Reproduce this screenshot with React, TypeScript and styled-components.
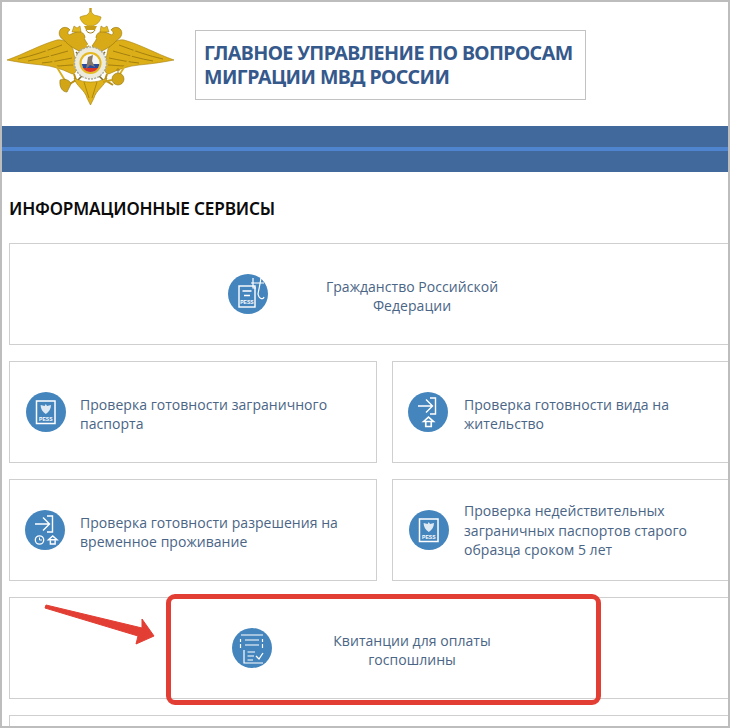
import styled, { createGlobalStyle } from "styled-components";

const GlobalStyle = createGlobalStyle`
  html, body { margin: 0; padding: 0; background: #fff; }
  * { box-sizing: border-box; }
`;

const Frame = styled.div`
  position: relative;
  width: 730px;
  height: 728px;
  overflow: hidden;
  border: 2px solid #bdbdbd;
  background: #fff;
  font-family: "Open Sans", "Noto Sans", sans-serif;
`;

const Header = styled.header`
  height: 124px;
  display: flex;
  align-items: flex-start;
  padding: 6px 0 0 4px;
`;

const TitleBox = styled.div`
  width: 391px;
  height: 70px;
  margin: 22px 0 0 19px;
  padding: 10px 8px 0;
  border: 1px solid #c2c2c2;
  color: #36598c;
  font-family: "Noto Sans", sans-serif;
  font-weight: 700;
  font-size: 19.6px;
  line-height: 24px;
  letter-spacing: -0.57px;
  white-space: nowrap;
`;

const Banner = styled.div`
  height: 46px;
  padding-top: 21px;
  background: #41699b;
`;

const Stripe = styled.div`
  height: 4px;
  background: #4f84cf;
`;

const Heading = styled.h1`
  margin: 26px 0 23px 7px;
  height: 22px;
  color: #0b0b0b;
  font-family: "Noto Sans", sans-serif;
  font-weight: 600;
  font-size: 17.2px;
  line-height: 22px;
  letter-spacing: -0.2px;
  white-space: nowrap;
`;

const Grid = styled.div`
  display: grid;
  grid-template-columns: 368px 368px;
  grid-auto-rows: 102px;
  gap: 16px 15px;
  margin-left: 7px;
`;

const Card = styled.div<{ $wide?: boolean; $inset: number; $gap: number }>`
  display: flex;
  align-items: center;
  gap: ${(p) => p.$gap}px;
  padding-left: ${(p) => p.$inset}px;
  border: 1px solid #cfcfcf;
  background: #fff;
  grid-column: ${(p) => (p.$wide ? "1 / span 2" : "auto")};
  color: #4a6585;
  font-size: 14px;
  line-height: 19.5px;
  letter-spacing: 0.04px;
`;

const Label = styled.div<{ $drop?: number }>`
  width: 280px;
  padding-top: ${(p) => p.$drop ?? 4}px;
`;

const CenteredLabel = styled.div`
  width: 200px;
  padding-top: 4px;
  text-align: center;
`;

const IconCircle = styled.svg`
  flex: none;
  width: 40px;
  height: 40px;
  display: block;
`;

const Highlight = styled.div`
  position: absolute;
  left: 164px;
  top: 592px;
  width: 435px;
  height: 111px;
  border: 5px solid #e33e33;
  border-radius: 9px;
`;

const Arrow = styled.svg`
  position: absolute;
  left: 38px;
  top: 598px;
  width: 120px;
  height: 50px;
`;

const Emblem = styled.svg`
  flex: none;
  width: 170px;
  height: 100px;
`;

function EagleSide({ flip }: { flip?: boolean }) {
  return (
    <g transform={flip ? "translate(169 0) scale(-1 1)" : undefined}>
      {/* wing */}
      <path d="M1 52 C18 46 36 36 51 32 C58 31 64 35 67 41 L70 56 C71 63 69 68 64 65 C56 61 46 58 36 57 C24 56 11 54 1 52 Z" fill="#dcae18" stroke="#a88210" strokeWidth=".6" />
      <path d="M12 51 C26 48 40 43 56 37 M22 53 C34 51 48 47 62 43 M36 55 C46 54 56 52 66 50 M50 58 C56 58 62 57 67 57" stroke="#94730c" strokeWidth=".8" fill="none" />
      {/* neck, head and curled feather */}
      <path d="M58 32 C54 30 52 26 54 22 C57 18 62 19 64 22 C62 23 61 25 63 27 L70 24 C75 22 80 26 79 32 L83 38 L76 44 C70 42 63 38 58 32 Z" fill="#d8aa17" stroke="#94730c" strokeWidth=".6" />
      <path d="M66 24 L68 18 L71 20 L74 18 L75 24 Z" fill="#e3b921" stroke="#94730c" strokeWidth=".5" />
      <path d="M79 30 L88 38" stroke="#fff" strokeWidth="1.2" />
      {/* sceptre line */}
      <path d="M39 40 L60 74" stroke="#d8ae1c" strokeWidth="1.8" />
      <path d="M70 44 L97 72" stroke="#7e6c28" strokeWidth="1.6" />
      {/* leg */}
      <path d="M68 66 L70 72 L62 77" stroke="#b98f14" strokeWidth="2" fill="none" />
    </g>
  );
}

function GoldEmblem() {
  return (
    <Emblem viewBox="0 0 170 100">
      <EagleSide />
      <EagleSide flip />
      {/* crown */}
      <path d="M84.5 18 C78 18 74 12 74 9 C78 7 81 8 82 6 L84.5 3 L87 6 C88 8 91 7 95 9 C95 12 91 18 84.5 18 Z" fill="#e3b81d" stroke="#a78311" strokeWidth=".6" />
      <path d="M84.5 -1 L84.5 4" stroke="#c79d18" strokeWidth="2.4" />
      <path d="M78 18 H91 L89 22 H80 Z" fill="#c79d18" />
      <path d="M80 22 C82 26 87 26 89 22" stroke="#9a7a14" fill="none" />
      {/* tail */}
      <path d="M68 70 C74 73 79 74 84.5 74 C90 74 95 73 101 70 C99 78 90 82 88 90 L84.5 97 L81 90 C79 82 70 78 68 70 Z" fill="#dfb21a" stroke="#a17d10" strokeWidth=".6" />
      <path d="M78 74 L83 90 M91 74 L86 90" stroke="#a07c0e" strokeWidth=".8" />
      {/* claws and orb */}
      <path d="M54 72 C58 70 64 72 65 76 L61 84 C57 84 53 80 54 72 Z" fill="#d2a517" stroke="#8f7312" strokeWidth=".6" />
      <circle cx="112" cy="71" r="6" fill="#d2a517" stroke="#8f7312" strokeWidth=".6" />
      <path d="M112 60 V65 M110 62 H114" stroke="#a98410" strokeWidth="1" />
      <path d="M97 74 L106 72" stroke="#c9a01a" strokeWidth="2" />
      {/* shield */}
      <circle cx="84.5" cy="55" r="16" fill="#ecebdc" stroke="#a9a99c" strokeWidth="1.4" strokeDasharray="2 1.2" />
      <circle cx="84.5" cy="55" r="11" fill="#e4b81e" />
      <circle cx="84.5" cy="55" r="9" fill="#f6f6f6" />
      <path d="M75.7 56 H93.3 A9 9 0 0 1 92 60 H77 Z" fill="#2a4ba0" />
      <path d="M77 60 H92 A9 9 0 0 1 77 60 Z" fill="#d9362b" />
      <path d="M82 49 L87 47 L86 53 L89 59 L84 57 L80 61 Z" fill="#85796c" />
    </Emblem>
  );
}

const Disc = () => <circle cx="20" cy="20" r="20" fill="#4585bd" />;

function CitizenIcon() {
  return (
    <IconCircle viewBox="0 0 40 40">
      <Disc />
      <rect x="11" y="12" width="16" height="21" fill="none" stroke="#fff" strokeWidth="1.4" />
      <path d="M14.5 17 H23.5 M16 21.5 H22" stroke="#fff" strokeWidth="1.3" />
      <text x="19" y="30" textAnchor="middle" fontSize="5" fontWeight="700" fill="#fff" fontFamily="Liberation Sans">PESS</text>
      <path d="M25 4 V14 H28 M23 9 H36 M33 4 C32 10 31 15 30 20 C31 25 35 26 36 23" stroke="#fff" strokeWidth="1.2" fill="none" />
    </IconCircle>
  );
}

function PassportIcon() {
  return (
    <IconCircle viewBox="0 0 40 40">
      <Disc />
      <rect x="10.5" y="9" width="18.5" height="22.5" fill="none" stroke="#fff" strokeWidth="1.5" />
      <path d="M19.8 12 L21 14 L25 13 C25 17 23 20 19.8 22 C16.6 20 14.6 17 14.6 13 L18.6 14 Z" fill="#dfe9f3" />
      <text x="19.8" y="29" textAnchor="middle" fontSize="5" fontWeight="700" fill="#fff" fontFamily="Liberation Sans">PESS</text>
    </IconCircle>
  );
}

function ArrowInPath() {
  return <path d="M10 14 H24 M18 7.5 L24.5 14 L18 20.5 M22 6 H27.5 V22 H22" stroke="#fff" strokeWidth="1.4" fill="none" />;
}

function HouseIcon({ x, y, size }: { x: number; y: number; size: number }) {
  const s = size / 10;
  return (
    <g transform={`translate(${x} ${y}) scale(${s})`} stroke="#fff" strokeWidth="1.5" fill="none">
      <path d="M.5 5 L5 1 L9.5 5 Z" />
      <path d="M2.5 5.5 V9.5 H7.5 V5.5" />
    </g>
  );
}

function ResidenceIcon() {
  return (
    <IconCircle viewBox="0 0 40 40">
      <Disc />
      <ArrowInPath />
      <HouseIcon x={15} y={24} size={11} />
    </IconCircle>
  );
}

function TemporaryIcon() {
  return (
    <IconCircle viewBox="0 0 40 40">
      <Disc />
      <ArrowInPath />
      <circle cx="14.5" cy="30" r="4.2" stroke="#fff" strokeWidth="1.3" fill="none" />
      <path d="M14.5 27.5 V30 H17" stroke="#fff" strokeWidth="1" fill="none" />
      <HouseIcon x={23} y={25} size={9.5} />
    </IconCircle>
  );
}

function ReceiptIcon() {
  return (
    <IconCircle viewBox="0 0 40 40">
      <Disc />
      <path d="M9 7 H31 M13 12 H27 M13 17 H27 M8.5 11 V14 M8.5 16 V20 M30.5 11 V14 M30.5 16 V20 M12 22 V35 H31 M15.5 24 H23 M15.5 28 H22 M15.5 32 H21" stroke="#fff" strokeWidth="1.2" fill="none" />
      <path d="M24 28 L27 31 L31 25" stroke="#fff" strokeWidth="1.3" fill="none" />
    </IconCircle>
  );
}

export default function App() {
  return (
    <>
      <GlobalStyle />
      <Frame>
        <Header>
          <GoldEmblem />
          <TitleBox>
            ГЛАВНОЕ УПРАВЛЕНИЕ ПО ВОПРОСАМ
            <br />
            МИГРАЦИИ МВД РОССИИ
          </TitleBox>
        </Header>
        <Banner>
          <Stripe />
        </Banner>
        <Heading>ИНФОРМАЦИОННЫЕ СЕРВИСЫ</Heading>
        <Grid>
          <Card $wide $inset={218} $gap={44}>
            <CitizenIcon />
            <CenteredLabel>
              Гражданство Российской
              <br />
              Федерации
            </CenteredLabel>
          </Card>
          <Card $inset={16} $gap={14}>
            <PassportIcon />
            <Label>Проверка готовности заграничного паспорта</Label>
          </Card>
          <Card $inset={15} $gap={16}>
            <ResidenceIcon />
            <Label>Проверка готовности вида на жительство</Label>
          </Card>
          <Card $inset={15} $gap={15}>
            <TemporaryIcon />
            <Label>Проверка готовности разрешения на временное проживание</Label>
          </Card>
          <Card $inset={16} $gap={15}>
            <PassportIcon />
            <Label $drop={1}>
              Проверка недействительных
              <br />
              заграничных паспортов старого
              <br />
              образца сроком 5 лет
            </Label>
          </Card>
          <Card $wide $inset={222} $gap={40}>
            <ReceiptIcon />
            <CenteredLabel>
              Квитанции для оплаты
              <br />
              госпошлины
            </CenteredLabel>
          </Card>
          <Card $wide $inset={222} $gap={40} />
        </Grid>
        <Highlight />
        <Arrow viewBox="0 0 120 50">
          <path d="M6 5 L102 28 L102 19 L114 36 L96 44 L98 36 L5 8 Z" fill="#e33e33" stroke="#e33e33" strokeLinejoin="round" />
        </Arrow>
      </Frame>
    </>
  );
}
